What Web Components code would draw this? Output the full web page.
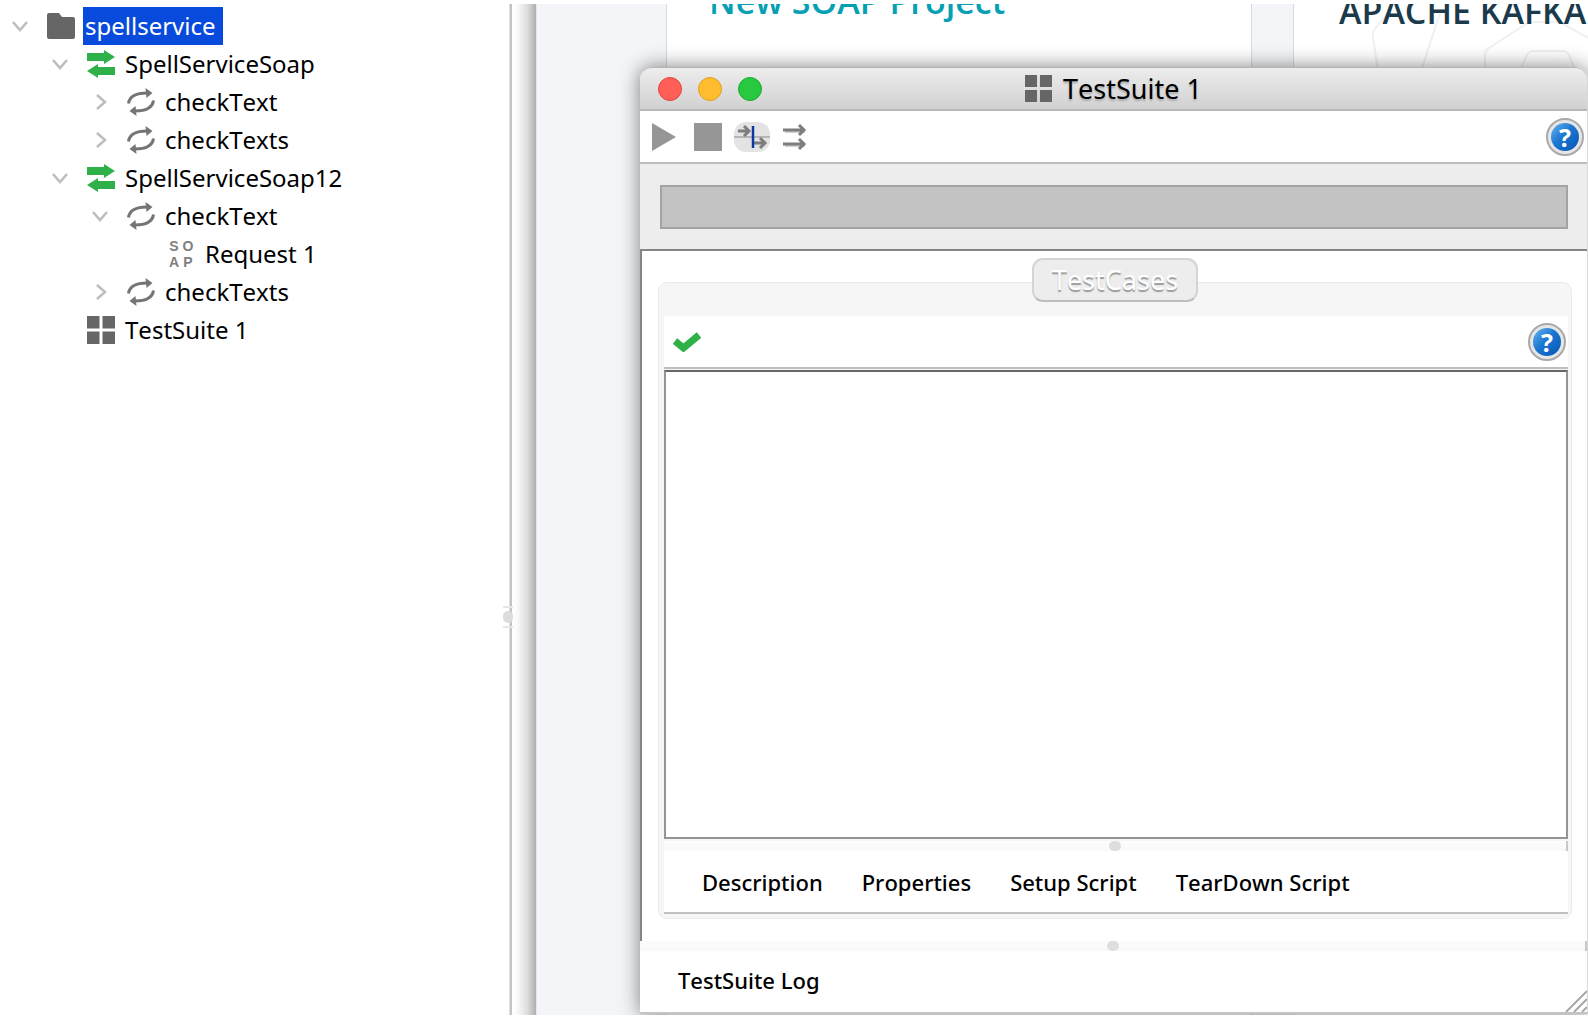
<!DOCTYPE html>
<html lang="en">
<head>
<meta charset="utf-8">
<title>TestSuite 1</title>
<style>
html,body{margin:0;height:100%;background:#fff;overflow:hidden}
body{font-family:"Noto Sans","Open Sans",sans-serif;font-kerning:none;color:#000}
</style>
</head>
<body>
<app-shell>
  <project-tree slot="nav">
    <tree-row level="0" icon="folder" state="open" selected>spellservice</tree-row>
    <tree-row level="1" icon="service" state="open">SpellServiceSoap</tree-row>
    <tree-row level="2" icon="operation" state="closed">checkText</tree-row>
    <tree-row level="2" icon="operation" state="closed">checkTexts</tree-row>
    <tree-row level="1" icon="service" state="open">SpellServiceSoap12</tree-row>
    <tree-row level="2" icon="operation" state="open">checkText</tree-row>
    <tree-row level="3" icon="soap">Request 1</tree-row>
    <tree-row level="2" icon="operation" state="closed">checkTexts</tree-row>
    <tree-row level="1" icon="suite">TestSuite 1</tree-row>
  </project-tree>
  <start-page></start-page>
  <suite-window>
    <test-cases></test-cases>
  </suite-window>
</app-shell>
<script>
const ICONS = {
  folder: '<svg width="28" height="26" viewBox="0 0 28 26"><path fill="#666" d="M0 2Q0 0 2 0H12L15 4H26Q28 4 28 6V24Q28 26 26 26H2Q0 26 0 24Z"/></svg>',
  service: '<svg width="28" height="28" viewBox="0 0 28 28"><path fill="#2fb14a" d="M0 3H17V0L28 7L17 14V11H0ZM28 17H11V14L0 21L11 28V25H28Z"/></svg>',
  operation: '<svg width="28" height="28" viewBox="0 0 28 28"><g fill="none" stroke="#757575" stroke-width="3"><path d="M1.500 15.500C2.500 8.500 8 5 20 5"/><path d="M26.500 12.500C25.500 19.500 20 23 8 23"/></g><path fill="#757575" d="M18.500 0L25.500 5L19.500 10ZM9.500 28L2.500 23L8.500 18Z"/></svg>',
  suite: '<svg width="28" height="28" viewBox="0 0 28 28"><path fill="#666" d="M0 0H12.500V12.500H0ZM15.500 0H28V12.500H15.500ZM0 15.500H12.500V28H0ZM15.500 15.500H28V28H15.500Z"/></svg>',
  soap: '<span class="soap"><i>S</i><i>O</i><i>A</i><i>P</i></span>'
};
const CHEVRON = {
  open: '<svg width="16" height="16" viewBox="0 0 16 16"><path d="M1 4L8 12L15 4" fill="none" stroke="#bdbdbd" stroke-width="2.500"/></svg>',
  closed: '<svg width="16" height="16" viewBox="0 0 16 16"><path d="M5 1L13 8L5 15" fill="none" stroke="#bdbdbd" stroke-width="2.500"/></svg>'
};
function define(name, render) {
  customElements.define(name, class extends HTMLElement {
    connectedCallback() {
      if (this.shadowRoot) return;
      this.attachShadow({mode: 'open'}).innerHTML = render(this);
    }
  });
}

define('app-shell', () => `
<style>
:host{display:flex;height:100vh;box-sizing:border-box;padding:4px 0 6px}
nav{flex:0 0 509px;min-width:0}
.divider{flex:none;width:2px;background:#c4c4c4;position:relative;border-left:1px solid #dedede}
.knob{position:absolute;left:-7px;top:607px;width:10px;height:12px;border-radius:5px;background:#dcdcdc}
.knob::before,.knob::after{content:"";position:absolute;left:0;width:10px;height:2px;background:#e6e6e6}
.knob::before{top:-5px}.knob::after{bottom:-5px}
.shade{flex:none;width:24px;background:linear-gradient(90deg,#fff 0,#fbfbfb 20%,#dcdcdc 65%,#aeaeae 100%)}
main{flex:1;min-width:0;position:relative;overflow:hidden;background:#f3f5f8;border-left:1px solid #e4e6e9}
</style>
<nav aria-label="Projects"><slot name="nav"></slot></nav>
<div class="divider"><div class="knob"></div></div>
<div class="shade"></div>
<main><slot></slot></main>`);

define('project-tree', () => `
<style>:host{display:flex;flex-direction:column;padding-top:3px}</style>
<slot></slot>`);

define('tree-row', el => `
<style>
:host{display:flex;align-items:center;height:38px;font-size:24px;line-height:38px;padding-left:calc(12px + ${el.getAttribute('level')} * 40px)}
.chev{width:16px;height:16px;flex:none;display:flex;padding:0;border:0;background:none}
.icon{width:28px;height:28px;margin-left:19px;flex:none;display:flex;align-items:center}
.label{margin-left:8px;padding:0 7px 0 2px;white-space:nowrap}
:host([selected]) .label{background:#084bdc;color:#fff}
.soap{display:grid;grid-template-columns:14px 14px;grid-template-rows:16px 16px;font:700 14px/16px "Liberation Sans",sans-serif;color:#808080;text-align:center}
i{font-style:normal}
</style>
${el.hasAttribute('state') ? `<button class="chev" aria-label="Toggle">${CHEVRON[el.getAttribute('state')]}</button>` : '<span class="chev"></span>'}
<span class="icon">${ICONS[el.getAttribute('icon')]}</span>
<span class="label"><slot></slot></span>`);

define('start-page', () => `
<style>
:host{display:flex;height:100%;gap:41px;padding-left:129px;font-family:"Open Sans",sans-serif}
article{background:#fff;border:solid #d5dae1;border-width:0 1px;box-sizing:border-box;flex:none;overflow:hidden;position:relative}
.soap{width:586px;padding-left:42px}
.kafka{width:620px;padding-left:45px}
h2{margin:0;font-weight:600;white-space:nowrap;line-height:40px;position:relative}
.soap h2{color:#05a0b4;font-size:34px;margin-top:-23px}
.kafka h2{color:#1b3a4b;font-size:34px;margin-top:-13px}
svg{position:absolute;left:0;top:0}
</style>
<article class="soap"><h2>New SOAP Project</h2></article>
<article class="kafka">
<svg width="294" height="70" viewBox="0 0 294 70" fill="none" stroke="#f0f0f0" stroke-width="2"><path d="M96 6L80 26Q78 29 79 33L83 60V64M146 9L128 64M191 64V51Q191 47 195 44L232 20Q236 18 240 18H266L294 34M227 64L233 51Q235 47 240 47H268Q273 47 275 51L280 64"/></svg>
<h2>APACHE KAFKA</h2></article>`);

define('help-button', () => `
<style>
:host{display:block;flex:none}
button{display:flex;align-items:center;justify-content:center;width:38px;height:38px;padding:3px;border:2px solid #a9a9a9;border-radius:50%;background:#e6e6e6}
span{flex:1;height:28px;border-radius:50%;background:linear-gradient(135deg,#6db4ec 0,#1a77d2 45%,#0656b4 100%);color:#fff;font:700 25px/28px "Noto Sans",sans-serif;text-align:center}
</style>
<button aria-label="Help"><span>?</span></button>`);

define('split-bar', () => `
<style>
:host{display:flex;justify-content:center;align-items:center;height:10px;background:linear-gradient(#fcfcfc,#f9f9f9);border-right:2px solid #c8c8c8}
div{width:12px;height:10px;border-radius:5px;background:#dedede}
</style><div></div>`);

define('suite-window', () => `
<style>
:host{position:absolute;left:103px;right:0;top:63px;bottom:1px;display:flex;flex-direction:column;box-sizing:border-box;border-right:1px solid #d8d8d8;border-bottom:2px solid #c4c4c4;border-top-left-radius:12px;border-top-right-radius:12px;background:#fff;box-shadow:0 0 20px rgba(0,0,0,.5)}
header{display:grid;grid-template-columns:1fr auto 1fr;align-items:center;height:41px;border-top:1px solid #b4b4b4;border-bottom:2px solid #b9b9b9;border-radius:12px 12px 0 0;background:linear-gradient(#ededed,#d1d1d1)}
.lights{display:flex;gap:16px;padding-left:18px}
.lights button{width:24px;height:24px;padding:0;border-radius:50%;border:1px solid #e0443e;background:#ff5f57}
.lights button:nth-child(2){background:#febc2e;border-color:#dfa023}
.lights button:nth-child(3){background:#28c840;border-color:#1dab2d}
h1{display:flex;align-items:center;gap:11px;margin:0;font-weight:400;font-size:27px;line-height:40px;text-shadow:0 2px 2px #aaa}
h1 svg{width:27px;height:27px}
.tools{display:flex;align-items:center;height:51px;padding:0 3px 0 12px;border-bottom:2px solid #bdbdbd}
.tools button{padding:0;border:0;background:none;display:flex}
.tools button+button{margin-left:12px}
.tools button:nth-child(1){margin-right:6px}
help-button{margin-left:auto}
.progress{flex:none;padding:21px 19px 20px 20px;background:#ededed}
.bar{height:40px;border:2px solid #a3a3a3;background:#c3c3c3}
.content{flex:1;min-height:0;display:flex;border-top:2px solid #858585;border-left:2px solid #858585}
.content ::slotted(*){flex:1}
footer{display:flex;align-items:flex-start;justify-content:space-between;height:61px;padding-left:38px}
footer button{margin-top:14px;padding:0;border:0;background:none;color:#000;font:500 22px/30px "Noto Sans",sans-serif;font-kerning:none}
footer svg{align-self:flex-end}
</style>
<header>
<div class="lights"><button aria-label="Close"></button><button aria-label="Minimize"></button><button aria-label="Zoom"></button></div>
<h1>${ICONS.suite}<span>TestSuite 1</span></h1><span></span>
</header>
<div class="tools">
<button aria-label="Run"><svg width="24" height="28" viewBox="0 0 24 28"><path fill="#969696" d="M0 0L24 14L0 28Z"/></svg></button>
<button aria-label="Stop"><svg width="28" height="28"><path fill="#969696" d="M0 0H28V28H0Z"/></svg></button>
<button aria-label="Sequential"><svg width="36" height="30" viewBox="0 0 36 30"><rect width="36" height="30" rx="12" fill="#e3e3e3"/><path d="M0 15H36" stroke="#b5b5b5" stroke-width="2"/><path d="M4 9H14M10 4L15 9L10 14M20 21H30M26 16L31 21L26 26" fill="none" stroke="#7d7d7d" stroke-width="3"/><path d="M19 4V26" stroke="#0b38a0" stroke-width="2.500"/></svg></button>
<button aria-label="Parallel"><svg width="26" height="28" viewBox="0 0 26 28"><path d="M3 9H23M3 23H23" stroke="#d0d0d0" stroke-width="2"/><path d="M1 7H21M17 2L22 7L17 12M1 21H21M17 16L22 21L17 26" fill="none" stroke="#7d7d7d" stroke-width="3"/></svg></button>
<help-button></help-button>
</div>
<div class="progress"><div class="bar" role="progressbar" aria-label="Progress"></div></div>
<div class="content"><slot></slot></div>
<split-bar></split-bar>
<footer><button>TestSuite Log</button><svg width="22" height="22" viewBox="0 0 22 22" stroke="#a8a8a8" stroke-width="2"><path d="M1 22L22 1M9 22L22 9M17 22L22 17"/></svg></footer>`);

define('test-cases', () => `
<style>
:host{display:flex;flex-direction:column;min-width:0;padding:7px 15px 22px 16px}
button.tab{align-self:center;position:relative;height:44px;margin-bottom:-20px;padding:0 18px;border:2px solid #d4d4d4;border-bottom-color:#bdbdbd;border-radius:11px;background:#ededed;color:#fff;font:400 27px/36px "Noto Sans",sans-serif;font-kerning:none;text-shadow:0 2px 1px #999}
section{flex:1;min-height:0;display:flex;flex-direction:column;padding:33px 3px 4px 5px;border:1px solid #ebebeb;border-radius:9px;background:#f6f6f6}
.tools{display:flex;align-items:center;height:51px;flex:none;padding:0 2px 0 9px;background:#fff;border-bottom:2px solid #bdbdbd}
.tools>button{display:flex;padding:0;border:0;background:none}
help-button{margin-left:auto}
.list{flex:1;margin-top:1px;background:#fff;border:2px solid #949494;border-top-color:#666}
split-bar{margin-top:2px}
.tabs{display:flex;align-items:center;gap:39px;height:61px;padding-left:38px;background:#fff;border-bottom:2px solid #c0c0c0}
.tabs button{padding:0;border:0;background:none;color:#000;font:500 22px/30px "Noto Sans",sans-serif;font-kerning:none}
</style>
<button class="tab">TestCases</button>
<section>
<div class="tools"><button aria-label="Select"><svg width="28" height="20" viewBox="0 0 28 20"><path d="M2 9L10.500 16L26 3" fill="none" stroke="#2fb14a" stroke-width="7"/></svg></button><help-button></help-button></div>
<div class="list"></div>
<split-bar></split-bar>
<div class="tabs"><button>Description</button><button>Properties</button><button>Setup Script</button><button>TearDown Script</button></div>
</section>`);
</script>
</body>
</html>
